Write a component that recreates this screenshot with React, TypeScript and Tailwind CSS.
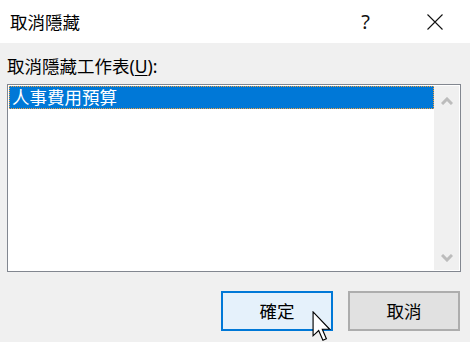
import React from "react";

const font = { fontFamily: '"Noto Sans", "Noto Sans CJK TC", sans-serif' };

export default function App() {
  return (
    <div
      className="relative w-[470px] h-[342px] bg-[#f0f0f0] text-black overflow-hidden flex flex-col"
      style={font}
    >
      {/* Title bar */}
      <div className="h-[43px] bg-white flex items-center pl-[10px] pr-[27px]">
        <div className="text-[17.5px] leading-[24px] flex-1">取消隱藏</div>
        <div className="text-[20px] leading-[24px] mr-[57px] text-[#111]">?</div>
        <svg width="16" height="16" viewBox="0 0 16 16" className="block">
          <path d="M0.5 0.5 L15.5 15.5 M15.5 0.5 L0.5 15.5" stroke="#111" strokeWidth="1.1" fill="none" />
        </svg>
      </div>

      {/* Label */}
      <div className="mt-[11px] pl-[7px] text-[17.5px] leading-[24px]">
        取消隱藏工作表(<span className="underline underline-offset-2">U</span>):
      </div>

      {/* List box */}
      <div className="mt-[6px] ml-[7px] w-[454px] h-[188px] border border-[#828790] bg-white p-px flex">
        <div className="flex-1 flex flex-col">
          <div className="h-[23px] bg-[#0078d7] border border-dotted border-[#f0a040] text-white text-[17.5px] leading-[21px] pl-[2px] flex items-center">
            人事費用預算
          </div>
        </div>
        <div className="w-[25px] bg-[#f0f0f0] flex flex-col justify-between">
          <div className="h-[30px] flex items-center justify-center">
            <svg width="12" height="8" viewBox="0 0 12 8">
              <polyline points="1,7 6,2 11,7" stroke="#bcbcbc" strokeWidth="3" fill="none" />
            </svg>
          </div>
          <div className="h-[25px] flex items-center justify-center">
            <svg width="12" height="8" viewBox="0 0 12 8">
              <polyline points="1,1 6,6 11,1" stroke="#bcbcbc" strokeWidth="3" fill="none" />
            </svg>
          </div>
        </div>
      </div>

      {/* Buttons */}
      <div className="mt-[19px] flex justify-end gap-[15px] pr-[10px]">
        <div className="w-[112px] h-[40px] border-2 border-[#0078d7] bg-[#e5f1fb] flex items-center justify-center text-[17.5px] leading-[24px]">
          確定
        </div>
        <div className="w-[112px] h-[40px] border-2 border-[#adadad] bg-[#e1e1e1] flex items-center justify-center text-[17.5px] leading-[24px]">
          取消
        </div>
      </div>

      {/* Mouse cursor */}
      <svg
        className="absolute left-[312px] top-[311px]"
        width="20"
        height="31"
        viewBox="0 0 13 20.5"
      >
        <path
          d="M0.6 0.6 V16.4 L4.3 12.9 L7.1 19.3 L9.4 18.3 L6.7 12.1 H11.6 Z"
          fill="#fff"
          stroke="#000"
          strokeWidth="0.75"
          strokeLinejoin="miter"
        />
      </svg>
    </div>
  );
}
